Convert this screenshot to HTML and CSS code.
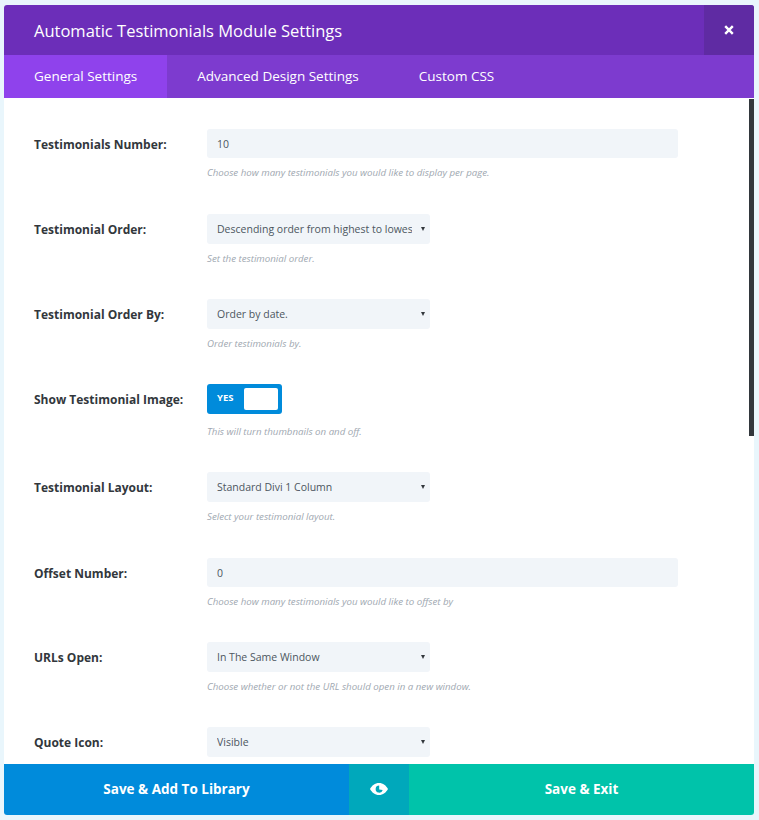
FILE: index.html
```html
<!DOCTYPE html>
<html lang="en">

<head>
  <meta charset="UTF-8" />
  <title>Automatic Testimonials Module Settings</title>
  <link rel="stylesheet" href="styles.css">
</head>

<body>
  <div class="modal">

    <div class="modal-header">
      <h2>Automatic Testimonials Module Settings</h2>
      <button class="close">
        <svg width="10" height="10" viewBox="0 0 10 10"><path d="M1.2 1.2l7.6 7.6M8.8 1.2l-7.6 7.6" stroke="#fff" stroke-width="2.4" /></svg>
      </button>
    </div>

    <ul class="modal-tabs">
      <li class="active">General Settings</li>
      <li>Advanced Design Settings</li>
      <li>Custom CSS</li>
    </ul>

    <div class="modal-body">
      <div class="scrollbar"></div>

      <div class="row">
        <label>Testimonials Number:</label>
        <div class="field">
          <input type="text" value="10" />
          <p class="help">Choose how many testimonials you would like to display per page.</p>
        </div>
      </div>

      <div class="row">
        <label>Testimonial Order:</label>
        <div class="field">
          <div class="select"><select><option>Descending order from highest to lowest.</option></select></div>
          <p class="help">Set the testimonial order.</p>
        </div>
      </div>

      <div class="row">
        <label>Testimonial Order By:</label>
        <div class="field">
          <div class="select"><select><option>Order by date.</option></select></div>
          <p class="help">Order testimonials by.</p>
        </div>
      </div>

      <div class="row row-toggle">
        <label>Show Testimonial Image:</label>
        <div class="field">
          <div class="toggle"><span>YES</span><i></i></div>
          <p class="help">This will turn thumbnails on and off.</p>
        </div>
      </div>

      <div class="row row-layout">
        <label>Testimonial Layout:</label>
        <div class="field">
          <div class="select"><select><option>Standard Divi 1 Column</option></select></div>
          <p class="help">Select your testimonial layout.</p>
        </div>
      </div>

      <div class="row row-offset">
        <label>Offset Number:</label>
        <div class="field">
          <input type="text" value="0" />
          <p class="help">Choose how many testimonials you would like to offset by</p>
        </div>
      </div>

      <div class="row">
        <label>URLs Open:</label>
        <div class="field">
          <div class="select"><select><option>In The Same Window</option></select></div>
          <p class="help">Choose whether or not the URL should open in a new window.</p>
        </div>
      </div>

      <div class="row">
        <label>Quote Icon:</label>
        <div class="field">
          <div class="select"><select><option>Visible</option></select></div>
        </div>
      </div>
    </div>

    <div class="modal-footer">
      <button class="btn-library">Save &amp; Add To Library</button>
      <button class="btn-preview">
        <svg width="18" height="12" viewBox="0 0 18 12"><path fill="#fff" fill-rule="evenodd" d="M9 0C5 0 1.800 2.600 0 6c1.800 3.400 5 6 9 6s7.200-2.600 9-6c-1.800-3.400-5-6-9-6zM9.200 2.400A3.600 3.600 0 1 0 12.700 7L9.200 6.500z" /></svg>
      </button>
      <button class="btn-save">Save &amp; Exit</button>
    </div>

  </div>
</body>

</html>
```

FILE: styles.css
```css
* {
  box-sizing: border-box;
}

body {
  margin: 0;
  height: 820px;
  padding: 5px 5px 5px 4px;
  background: #e9f6fc;
  font-family: "Open Sans", "Liberation Sans", sans-serif;
  overflow: hidden;
}

.modal {
  height: 810px;
  display: flex;
  flex-direction: column;
  background: #fff;
  border-radius: 3px;
  overflow: hidden;
}

.modal-header {
  height: 50px;
  flex: none;
  display: flex;
  align-items: center;
  justify-content: space-between;
  background: #6c2eb9;
}

.modal-header h2 {
  margin: 0;
  padding-left: 30px;
  color: #fff;
  font-size: 16.5px;
  font-weight: 400;
}

.close {
  width: 50px;
  height: 50px;
  border: none;
  padding: 0;
  background: #5f2ba3;
  display: flex;
  align-items: center;
  justify-content: center;
}

.modal-tabs {
  height: 43px;
  flex: none;
  margin: 0;
  padding: 0;
  list-style: none;
  display: flex;
  background: #7d3bcf;
}

.modal-tabs li {
  padding: 0 30px;
  color: #fff;
  font-size: 13.5px;
  line-height: 43px;
}

.modal-tabs li.active {
  background: #8f42ec;
}

.modal-body {
  flex: 1;
  position: relative;
  overflow: hidden;
  padding: 31px 0 0 30px;
}

.scrollbar {
  position: absolute;
  top: 1px;
  right: 0;
  width: 5px;
  height: 337px;
  background: #32373c;
}

.row {
  display: flex;
  height: 85px;
}

.row-toggle {
  height: 88px;
}

.row-layout {
  height: 86px;
}

.row-offset {
  height: 84px;
}

.row label {
  width: 173px;
  flex: none;
  padding-top: 8px;
  color: #32373c;
  font-size: 12px;
  font-weight: 700;
  line-height: 16px;
}

.field input {
  display: block;
  width: 471px;
  height: 29px;
  border: none;
  border-radius: 3px;
  padding: 0 10px;
  background: #f1f5f9;
  color: #4c5560;
  font-family: inherit;
  font-size: 10.5px;
}

.select {
  position: relative;
  width: 223px;
}

/* small arrow like the native one */
.select::after {
  content: "";
  position: absolute;
  top: 13px;
  right: 5px;
  border-top: 4px solid #32373c;
  border-left: 2.5px solid transparent;
  border-right: 2.5px solid transparent;
}

.select select {
  display: block;
  width: 100%;
  height: 30px;
  appearance: none;
  border: none;
  border-radius: 3px;
  padding: 0 18px 0 10px;
  background-color: #f1f5f9;
  color: #4c5560;
  font-family: inherit;
  font-size: 10.5px;
}

.help {
  margin: 8px 0 0;
  color: #a0a8b1;
  font-size: 9.7px;
  font-style: italic;
  line-height: 14px;
}

.toggle {
  width: 75px;
  height: 30px;
  border-radius: 3px;
  padding: 4px;
  background: #008bdb;
  display: flex;
  align-items: center;
  justify-content: space-between;
}

.toggle span {
  padding: 0 0 3px 6px;
  color: #fff;
  font-size: 9.5px;
  font-weight: 700;
}

.toggle i {
  width: 34px;
  height: 22px;
  border-radius: 2px;
  background: #fff;
}

.row-toggle .help {
  margin-top: 11px;
}

.modal-footer {
  height: 51px;
  flex: none;
  display: flex;
}

.modal-footer button {
  border: none;
  padding: 0 0 2px;
  color: #fff;
  font-family: inherit;
  font-size: 13.5px;
  font-weight: 700;
}

.btn-library {
  flex: 1;
  background: #008bdb;
}

.btn-preview {
  width: 60px;
  background: #00a8bb;
  display: flex;
  align-items: center;
  justify-content: center;
}

.btn-save {
  flex: 1;
  background: #00c3aa;
}
```
